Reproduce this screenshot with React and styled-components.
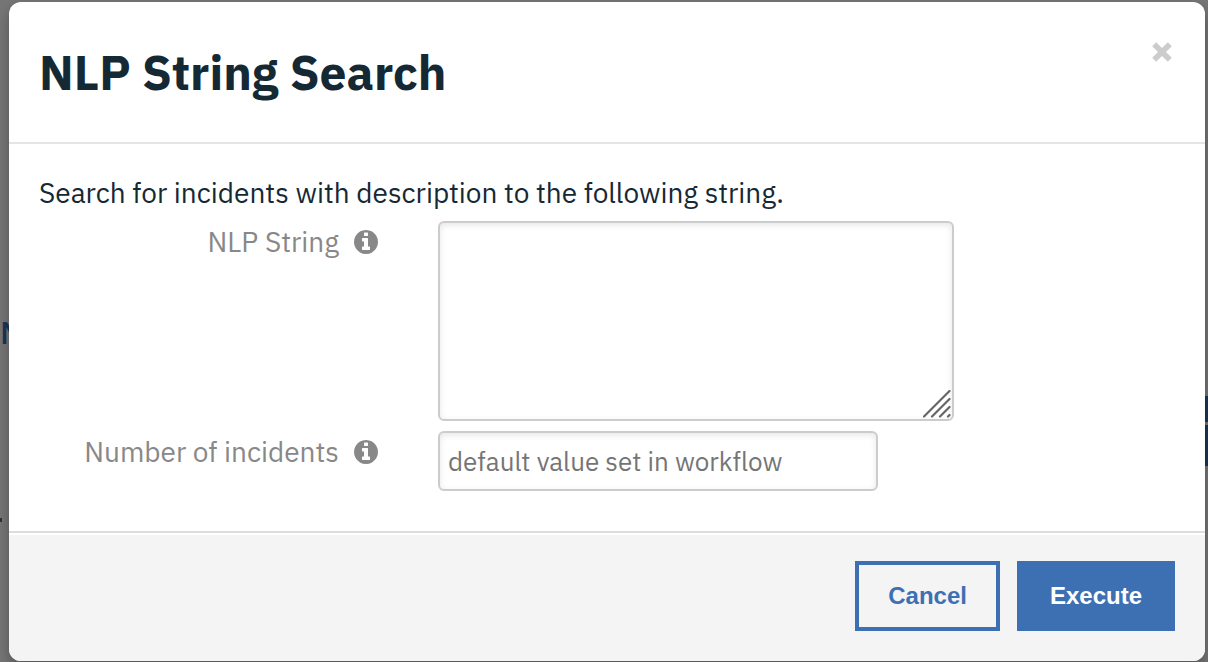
import React from "react";
import styled, { createGlobalStyle, css } from "styled-components";

const GlobalStyle = createGlobalStyle`
  *, *::before, *::after { box-sizing: border-box; }
  body {
    margin: 0;
    background: #767676;
    color: #152935;
    font-family: "IBM Plex Sans", Roboto, "Liberation Sans", sans-serif;
    font-size: 28px;
    line-height: 40px;
  }
`;

const Backdrop = styled.div`
  position: relative;
  display: flex;
  min-height: 100vh;
  padding: 2px 3px 1px 9px;
  overflow: hidden;
`;

const PageLetter = styled.span`
  position: absolute;
  left: 0;
  top: 312px;
  color: #1c3558;
  font-size: 32px;
  font-weight: 500;
`;

const PageMark = styled.span`
  position: absolute;
  left: 0;
  top: 518px;
  width: 2px;
  height: 4px;
  background: #333;
`;

const PageButton = styled.span`
  position: absolute;
  right: 0;
  top: ${(p) => p.$top}px;
  width: 8px;
  height: ${(p) => p.$height}px;
  background: #1c3558;
`;

const Dialog = styled.section`
  position: relative;
  flex: 1;
  display: flex;
  flex-direction: column;
  overflow: hidden;
  border-radius: 12px;
  background: #fff;
  box-shadow: 0 6px 14px rgba(0, 0, 0, 0.3);
`;

const Header = styled.header`
  display: flex;
  align-items: flex-start;
  justify-content: space-between;
  padding: 39px 32px 39px 30px;
  border-bottom: 2px solid #e5e5e5;
`;

const Title = styled.h1`
  margin: 0;
  font-size: 48px;
  line-height: 62px;
  font-weight: 700;
`;

const CloseButton = styled.button`
  display: flex;
  padding: 0;
  border: 0;
  background: none;
  color: #ccc;
  cursor: pointer;
`;

const Body = styled.form`
  flex: 1;
  padding: 29px 30px 30px;
`;

const Intro = styled.p`
  margin: 0 0 8px;
`;

const Field = styled.div`
  display: grid;
  grid-template-columns: 339px minmax(0, 1fr);
  column-gap: 60px;
  align-items: start;
  margin-bottom: 10px;
`;

const Label = styled.label`
  display: flex;
  align-items: center;
  justify-content: flex-end;
  gap: 15px;
  color: #888;
  line-height: 42px;
`;

const controlStyle = css`
  display: block;
  width: 100%;
  padding: 8px;
  border: 2px solid #ccc;
  border-radius: 6px;
  background: #fff;
  box-shadow: inset 0 2px 6px rgba(0, 0, 0, 0.1);
  color: #555;
  font: inherit;
  font-size: 26px;
  &::placeholder { color: #757575; opacity: 1; }
`;

const AreaWrap = styled.div`
  position: relative;
  max-width: 516px;
`;

const TextArea = styled.textarea`
  ${controlStyle}
  height: 200px;
  resize: none;
`;

const Grip = styled.svg`
  position: absolute;
  right: 3px;
  bottom: 3px;
  pointer-events: none;
`;

const TextInput = styled.input`
  ${controlStyle}
  max-width: 440px;
  height: 60px;
`;

const Footer = styled.footer`
  display: flex;
  justify-content: flex-end;
  gap: 17px;
  padding: 28px 30px 30px;
  border-top: 2px solid #ddd;
  background: #f4f4f4;
  box-shadow: inset 0 2px 0 #fff;
`;

const Button = styled.button`
  height: 70px;
  padding: 0 29px;
  border: 4px solid #3d70b2;
  background: ${(p) => (p.$primary ? "#3d70b2" : "transparent")};
  color: ${(p) => (p.$primary ? "#fff" : "#3d70b2")};
  font-family: "Helvetica Neue", "Liberation Sans", sans-serif;
  font-size: 24px;
  font-weight: 700;
  cursor: pointer;
`;

function InfoIcon() {
  return (
    <svg width="24" height="24" viewBox="0 128 1536 1536" fill="currentColor" aria-hidden="true">
      <path d="M1024 1376v-160q0-14-9-23t-23-9h-96v-512q0-14-9-23t-23-9h-320q-14 0-23 9t-9 23v160q0 14 9 23t23 9h96v320h-96q-14 0-23 9t-9 23v160q0 14 9 23t23 9h448q14 0 23-9t9-23zm-128-896v-160q0-14-9-23t-23-9h-192q-14 0-23 9t-9 23v160q0 14 9 23t23 9h192q14 0 23-9t9-23zm640 416q0 209-103 385.5t-279.5 279.5-385.5 103-385.5-103-279.5-279.5-103-385.5 103-385.5 279.5-279.5 385.5-103 385.5 103 279.5 279.5 103 385.5z" />
    </svg>
  );
}

export default function App() {
  return (
    <>
      <GlobalStyle />
      <Backdrop>
        <PageLetter aria-hidden="true">N</PageLetter>
        <PageMark />
        <PageButton $top={396} $height={26} />
        <PageButton $top={425} $height={41} />
        <Dialog role="dialog" aria-labelledby="dialog-title">
          <Header>
            <Title id="dialog-title">NLP String Search</Title>
            <CloseButton type="button" aria-label="Close">
              <svg width="22" height="22" viewBox="0 0 22 22">
                <path d="M3.2 3.2L18.8 18.8M18.8 3.2L3.2 18.8" stroke="currentColor" strokeWidth="5.6" />
              </svg>
            </CloseButton>
          </Header>
          <Body id="search-form">
            <Intro>Search for incidents with description to the following string.</Intro>
            <Field>
              <Label htmlFor="nlp-string">
                NLP String
                <InfoIcon />
              </Label>
              <AreaWrap>
                <TextArea id="nlp-string" />
                <Grip width="28" height="28" viewBox="0 0 28 28">
                  <path
                    d="M1 26.5L26.5 1M9 26.5L26.5 9M17 26.5L26.5 17M25 26.5L26.5 25"
                    fill="none"
                    stroke="#666"
                    strokeWidth="2.2"
                    strokeLinecap="round"
                  />
                </Grip>
              </AreaWrap>
            </Field>
            <Field>
              <Label htmlFor="incident-count">
                Number of incidents
                <InfoIcon />
              </Label>
              <TextInput
                id="incident-count"
                type="text"
                placeholder="default value set in workflow"
              />
            </Field>
          </Body>
          <Footer>
            <Button type="button">Cancel</Button>
            <Button type="submit" form="search-form" $primary>
              Execute
            </Button>
          </Footer>
        </Dialog>
      </Backdrop>
    </>
  );
}
